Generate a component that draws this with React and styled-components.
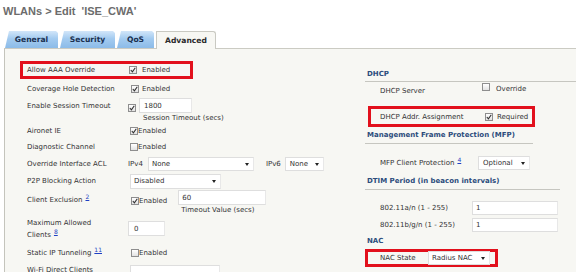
import styled, { createGlobalStyle } from 'styled-components';

const GlobalStyle = createGlobalStyle`
  body {
    margin: 0;
    background: #fff;
    font-family: "DejaVu Sans", Verdana, sans-serif;
  }
`

const Page = styled.div`
  width: 576px;
  height: 272px;
  overflow: hidden;
  padding-left: 4px;
  box-sizing: border-box;
`

const Title = styled.div`
  font-family: "Liberation Sans", Arial, sans-serif;
  font-weight: 700;
  font-size: 11px;
  line-height: 13px;
  color: #6c6c6c;
  padding: 5px 0 0 0;
  margin-left: -1px;
  white-space: pre;
`

const TabBar = styled.div`
  display: flex;
  align-items: flex-end;
  gap: 2px;
  height: 17px;
  margin: 13px 0 0 1px;
`

const Tab = styled.div`
  width: ${p => p.$w}px;
  height: ${p => (p.$active ? 18 : 17)}px;
  box-sizing: border-box;
  display: flex;
  align-items: center;
  justify-content: center;
  font-weight: 700;
  font-size: 7.6px;
  color: ${p => (p.$active ? '#2b2b2b' : '#1a3050')};
  background: ${p => (p.$active
    ? '#f7f7f3'
    : 'linear-gradient(#d2e6f9, #a3cbf0 45%, #8cbbe8)')};
  border: ${p => (p.$active ? '1px solid #c9c9c2' : 'none')};
  border-bottom: none;
  border-radius: ${p => (p.$active ? '0 3px 0 0' : '0')};
  clip-path: ${p => (p.$active
    ? 'none'
    : 'polygon(4px 0, calc(100% - 2px) 0, 100% 2px, 100% 100%, 0 100%)')};
  margin-bottom: ${p => (p.$active ? -1 : 0)}px;
  position: relative;
  z-index: 1;
`

const Panel = styled.div`
  height: 224px;
  box-sizing: border-box;
  border-top: 1px solid #cbcbc3;
  border-left: 1px solid #c4c4bc;
  background: #f7f7f3;
  display: flex;
  color: #333;
  font-size: 7px;
`

const LeftCol = styled.div`
  width: 360px;
  flex-shrink: 0;
  padding-top: 12px;
  display: flex;
  flex-direction: column;
  overflow: hidden;
`

const RightCol = styled.div`
  flex: 1;
  padding-top: 17px;
  display: flex;
  flex-direction: column;
  overflow: hidden;
`

const Row = styled.div`
  display: flex;
  flex-shrink: 0;
  align-items: ${p => (p.$top ? 'flex-start' : 'center')};
  height: ${p => p.$h}px;
  box-sizing: border-box;
  margin-left: ${p => p.$ml ?? 15}px;
  margin-top: ${p => p.$mt ?? 0}px;
  padding-left: ${p => p.$pl ?? 7}px;
  padding-top: ${p => p.$pt ?? 0}px;
  width: ${p => (p.$w ? `${p.$w}px` : 'auto')};
  outline: ${p => (p.$hl ? '3px solid #e2101c' : 'none')};
  outline-offset: -3px;
  white-space: nowrap;
`

const Label = styled.div`
  width: ${p => p.$w ?? 101}px;
  flex-shrink: 0;
  line-height: ${p => p.$lh ?? 10}px;
  padding-top: ${p => p.$pt ?? 0}px;
`

const Group = styled.div`
  display: flex;
  align-items: ${p => (p.$top ? 'flex-start' : 'center')};
  gap: ${p => p.$gap ?? 0}px;
  margin-left: ${p => p.$ml ?? 0}px;
  margin-top: ${p => p.$mt ?? 0}px;
`

const Stack = styled.div`
  display: flex;
  flex-direction: column;
  margin-left: ${p => p.$ml ?? 0}px;
`

const Box = styled.span`
  width: 8px;
  height: 8px;
  box-sizing: border-box;
  border: 1px solid #8e8e8e;
  background: linear-gradient(#ffffff, #e2e2e2);
  display: inline-flex;
  align-items: center;
  justify-content: center;
  flex-shrink: 0;
  margin-top: ${p => p.$mt ?? 0}px;
  align-self: ${p => (p.$mt !== undefined ? 'flex-start' : 'auto')};
`

const Opt = styled.span`
  line-height: 10px;
  margin-top: ${p => p.$mt ?? 0}px;
`

const Field = styled.div`
  width: ${p => p.$w}px;
  height: ${p => p.$h ?? 15}px;
  box-sizing: border-box;
  background: #fff;
  border: 1px solid #dedede;
  border-right-color: #e8e8e8;
  padding-left: ${p => p.$pl ?? 4}px;
  display: flex;
  align-items: center;
  margin-top: ${p => p.$mt ?? 0}px;
  flex-shrink: 0;
`

const Select = styled(Field)`
  position: relative;
  &::after {
    content: '';
    position: absolute;
    right: 4px;
    top: 50%;
    margin-top: -1px;
    border-top: 3px solid #222;
    border-left: 2.5px solid transparent;
    border-right: 2.5px solid transparent;
  }
`

const Note = styled.div`
  line-height: 10px;
  padding-left: ${p => p.$pl ?? 4}px;
`

const Sup = styled.a`
  color: #1e3fc4;
  text-decoration: underline;
  font-size: 6px;
  line-height: 0;
  vertical-align: 3px;
  margin-left: 3px;
`

const Header = styled.div`
  height: ${p => p.$h}px;
  flex-shrink: 0;
  box-sizing: border-box;
  width: ${p => (p.$w ? `${p.$w}px` : '100%')};
  padding-left: 2px;
  display: flex;
  align-items: center;
  font-weight: 700;
  color: #2c4c7c;
  border-bottom: ${p => (p.$line ? '1px solid #c6c6c0' : 'none')};
  white-space: nowrap;
`

const Check = ({ on, mt }) => (
  <Box $mt={mt}>
    {on && (
      <svg width="6" height="6" viewBox="0 0 6 6">
        <path d="M0.8 3 L2.4 4.8 L5.3 0.8" fill="none" stroke="#303030" strokeWidth="1.1" />
      </svg>
    )}
  </Box>
)

export default function App() {
  return (
    <Page>
      <GlobalStyle />
      <Title>{"WLANs > Edit  'ISE_CWA'"}</Title>
      <TabBar>
        <Tab $w={53}>General</Tab>
        <Tab $w={55}>Security</Tab>
        <Tab $w={37}>QoS</Tab>
        <Tab $w={60} $active>Advanced</Tab>
      </TabBar>
      <Panel>
        <LeftCol>
          <Row $h={18} $hl $w={173}>
            <Label>Allow AAA Override</Label>
            <Group $gap={5} $ml={1}>
              <Check on />
              <Opt>Enabled</Opt>
            </Group>
          </Row>
          <Row $h={19}>
            <Label>Coverage Hole Detection</Label>
            <Group $gap={3} $ml={3}>
              <Check on />
              <Opt>Enabled</Opt>
            </Group>
          </Row>
          <Row $h={25} $top>
            <Label $pt={3}>Enable Session Timeout</Label>
            <Check on mt={6} />
            <Stack $ml={3}>
              <Field $w={53}>1800</Field>
              <Note>Session Timeout (secs)</Note>
            </Stack>
          </Row>
          <Row $h={15}>
            <Label>Aironet IE</Label>
            <Group $ml={2}>
              <Check on />
              <Opt>Enabled</Opt>
            </Group>
          </Row>
          <Row $h={18}>
            <Label>Diagnostic Channel</Label>
            <Group $ml={2}>
              <Check />
              <Opt>Enabled</Opt>
            </Group>
          </Row>
          <Row $h={16}>
            <Label>Override Interface ACL</Label>
            <Opt>IPv4</Opt>
            <Select $w={106} $h={14} $pl={3} style={{ marginLeft: 5 }}>None</Select>
            <Opt style={{ marginLeft: 12 }}>IPv6</Opt>
            <Select $w={39} $h={14} $pl={4} style={{ marginLeft: 4 }}>None</Select>
          </Row>
          <Row $h={18}>
            <Label>P2P Blocking Action</Label>
            <Select $w={91} $h={15} $pl={3} style={{ marginLeft: 2 }}>Disabled</Select>
          </Row>
          <Row $h={26} $top>
            <Label $pt={5}>
              Client Exclusion<Sup>2</Sup>
            </Label>
            <Group $ml={3} $mt={6}>
              <Check on />
              <Opt>Enabled</Opt>
            </Group>
            <Stack $ml={11}>
              <Field $w={88} $pl={3}>60</Field>
              <Note $pl={3}>Timeout Value (secs)</Note>
            </Stack>
          </Row>
          <Row $h={28} $top>
            <Label $lh={12} $pt={1}>
              Maximum Allowed
              <br />
              Clients<Sup>8</Sup>
            </Label>
            <Field $w={37} $mt={5} $pl={5}>0</Field>
          </Row>
          <Row $h={18}>
            <Label>
              Static IP Tunneling<Sup>11</Sup>
            </Label>
            <Group $ml={3}>
              <Check />
              <Opt>Enabled</Opt>
            </Group>
          </Row>
          <Row $h={18} $top>
            <Label $pt={3}>Wi-Fi Direct Clients</Label>
            <Select $w={90} $h={15} $mt={3} style={{ marginLeft: 2 }} />
          </Row>
        </LeftCol>

        <RightCol>
          <Header $h={16} $line>DHCP</Header>
          <Row $h={17} $ml={0} $pl={15} $top>
            <Label $w={102} $pt={4}>DHCP Server</Label>
            <Check mt={1} />
            <Opt $mt={2} style={{ marginLeft: 6 }}>Override</Opt>
          </Row>
          <Row $h={21} $hl $ml={3} $pl={12} $mt={7} $w={167}>
            <Label $w={105}>DHCP Addr. Assignment</Label>
            <Check on />
            <Opt style={{ marginLeft: 4 }}>Required</Opt>
          </Row>
          <Header $h={17} $w={168} $line>Management Frame Protection (MFP)</Header>
          <Row $h={29} $ml={0} $pl={15} $pt={8}>
            <Label $w={98}>
              MFP Client Protection<Sup>4</Sup>
            </Label>
            <Select $w={52} $h={14} $pl={4}>Optional</Select>
          </Row>
          <Header $h={17} $w={195} $line>DTIM Period (in beacon intervals)</Header>
          <Row $h={17} $ml={0} $pl={15} $mt={9}>
            <Label $w={92}>802.11a/n (1 - 255)</Label>
            <Field $w={86} $h={14} $pl={3}>1</Field>
          </Row>
          <Row $h={17} $ml={0} $pl={15}>
            <Label $w={92}>802.11b/g/n (1 - 255)</Label>
            <Field $w={86} $h={14} $pl={3}>1</Field>
          </Row>
          <Header $h={16}>NAC</Header>
          <Row $h={18} $hl $ml={0} $pl={15} $w={133}>
            <Label $w={48}>NAC State</Label>
            <Select $w={62} $h={14} $pl={3}>Radius NAC</Select>
          </Row>
        </RightCol>
      </Panel>
    </Page>
  );
}
